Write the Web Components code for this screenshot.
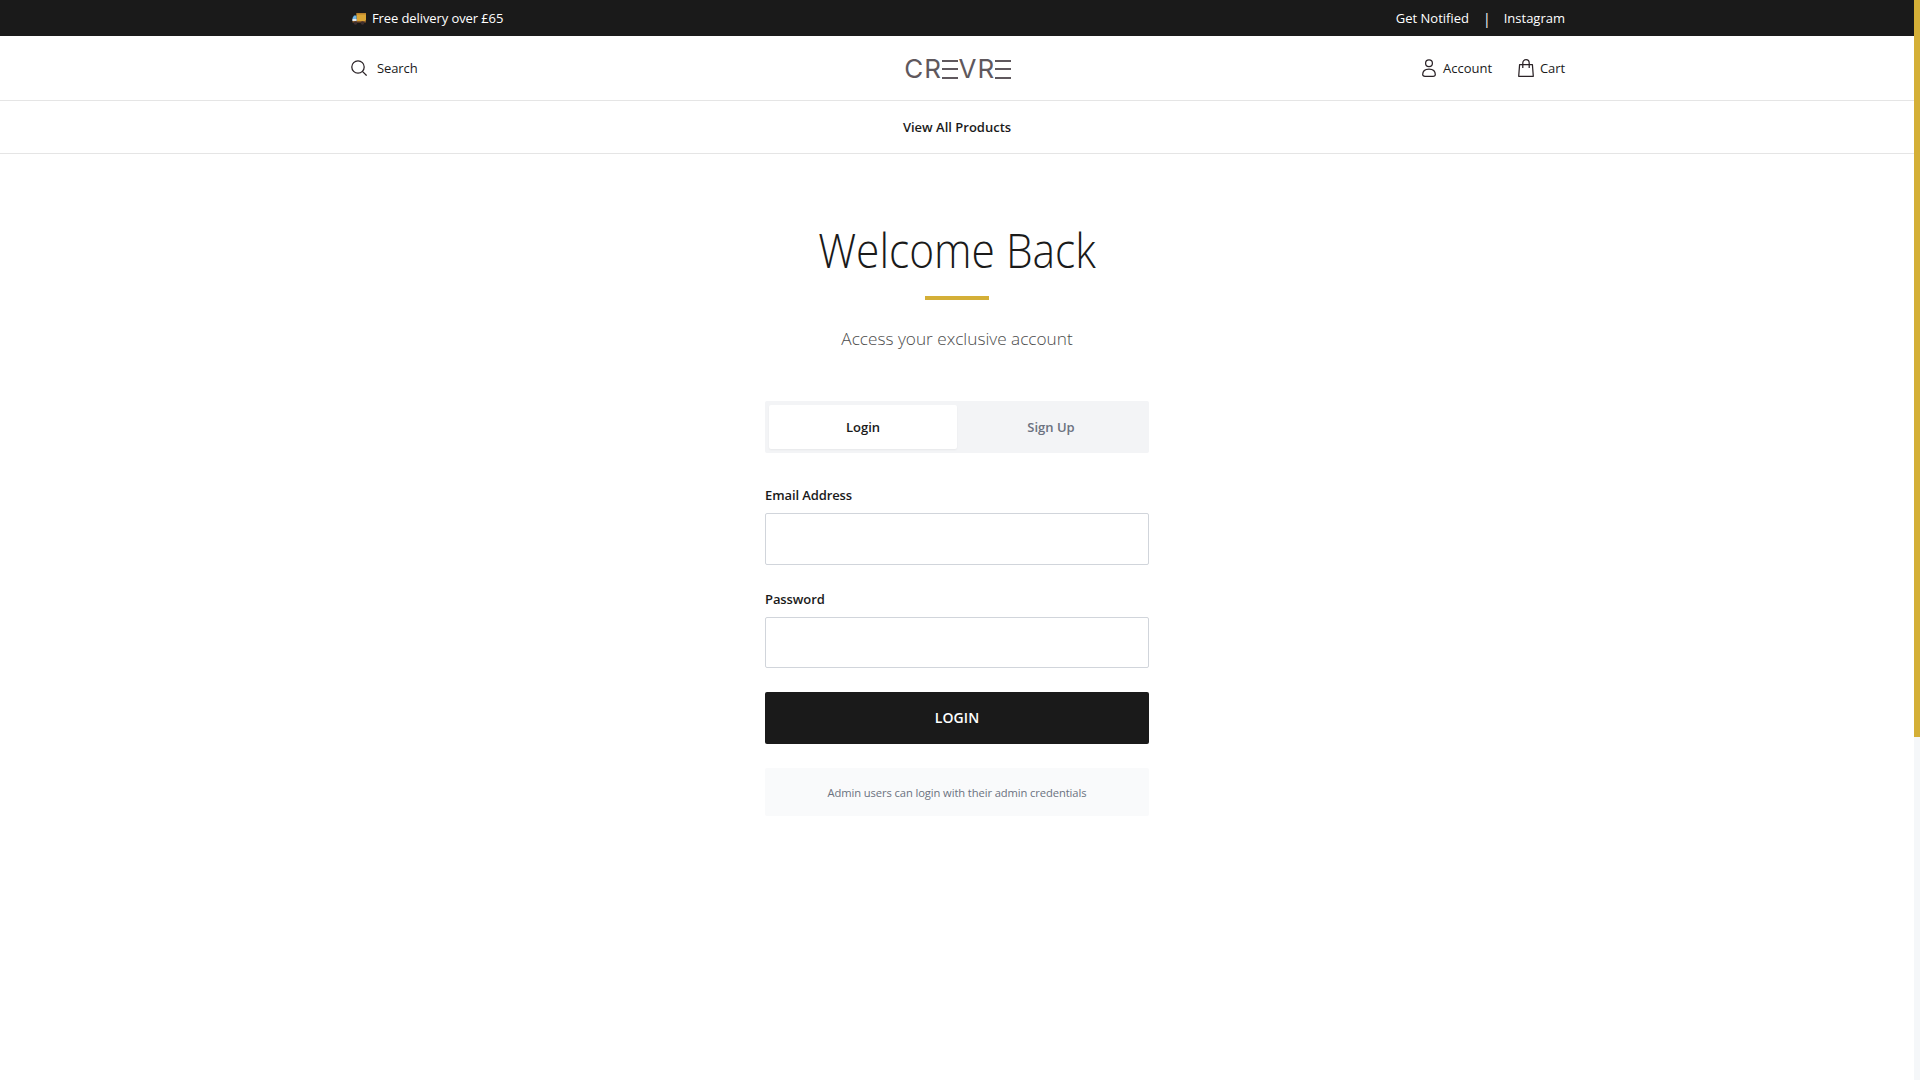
<!DOCTYPE html>
<html lang="en">
<head>
<meta charset="utf-8">
<title>Crevre - Login</title>
<style>
  html, body { height: 100%; }
  body {
    margin: 0;
    padding-right: 6px;
    box-sizing: border-box;
    background: #fff;
    color: #1a1a1a;
    font-family: "Open Sans", "Noto Sans", "Liberation Sans", sans-serif;
    font-size: 14px;
    overflow: hidden;
  }
</style>
</head>
<body>
<promo-bar></promo-bar>
<site-header></site-header>
<site-nav></site-nav>
<main-section>
  <auth-card></auth-card>
</main-section>
<gold-scrollbar></gold-scrollbar>

<script>
// top black strip
class PromoBar extends HTMLElement {
  constructor() {
    super();
    this.attachShadow({ mode: 'open' });
    this.shadowRoot.innerHTML = `
      <style>
        :host { display: block; background: #1a1a1a; color: #fff; margin-right: -6px; padding-right: 6px; }
        .inner {
          max-width: 1216px; height: 36px; margin: 0 auto; padding-left: 3px;
          box-sizing: border-box;
          display: flex; align-items: center; justify-content: space-between;
          font-size: 13px; letter-spacing: -0.1px;
        }
        .left { display: flex; align-items: center; gap: 6px; }
        .right { display: flex; align-items: center; letter-spacing: 0; }
        .sep { margin: 0 13px 0 14px; font-size: 14px; }
        svg { display: block; }
      </style>
      <div class="inner">
        <div class="left">
          <svg width="14" height="13" viewBox="0 0 14 13">
            <rect x="4.5" y="1" width="9.5" height="8" rx="1" fill="#d9a536"/>
            <rect x="4.5" y="1" width="9.5" height="1.5" fill="#b9812c"/>
            <path d="M0.5 6 L2 3.5 H4.5 V9 H0.5 Z" fill="#6fb6e8"/>
            <rect x="0.5" y="7" width="4" height="2" fill="#e8e8e8"/>
            <rect x="0.5" y="9" width="13.5" height="1.5" fill="#8a5a2b"/>
            <circle cx="3.5" cy="11" r="1.8" fill="#3f3030"/>
            <circle cx="10.5" cy="11" r="1.8" fill="#3f3030"/>
          </svg>
          <span>Free delivery over £65</span>
        </div>
        <div class="right">
          <span>Get Notified</span>
          <span class="sep">|</span>
          <span>Instagram</span>
        </div>
      </div>
    `;
  }
}

class SiteHeader extends HTMLElement {
  constructor() {
    super();
    this.attachShadow({ mode: 'open' });
    this.shadowRoot.innerHTML = `
      <style>
        :host { display: block; border-bottom: 1px solid #e5e5e5; }
        .inner {
          max-width: 1216px; height: 64px; margin: 0 auto;
          display: grid; grid-template-columns: 1fr auto 1fr; align-items: center;
          font-size: 13px; letter-spacing: -0.1px; color: #1a1a1a;
        }
        .item { display: flex; align-items: center; }
        .left { display: flex; padding-left: 2px; }
        .right { display: flex; justify-content: flex-end; gap: 26px; }
        .search { gap: 10px; }
        .account { gap: 7px; letter-spacing: 0; }
        .cart { gap: 6px; }
        svg { display: block; fill: none; stroke: #2a2226; stroke-width: 1.25; }
        .logo {
          font-family: "Inter", "Liberation Sans", sans-serif;
          font-size: 26px; font-weight: 400; color: #5f585d;
          letter-spacing: 1px; line-height: 1; display: flex;
          position: relative; top: 1px; left: 1px;
        }
        /* the logo's E is three flat bars */
        .logo b {
          font-weight: 400; color: transparent;
          background: linear-gradient(#5f585d, #5f585d) 0 4px / 16px 2px no-repeat,
                      linear-gradient(#5f585d, #5f585d) 0 12px / 16px 2px no-repeat,
                      linear-gradient(#5f585d, #5f585d) 0 21px / 16px 2px no-repeat;
        }
      </style>
      <div class="inner">
        <div class="left"><span class="item search">
          <svg width="16" height="16" viewBox="0 0 16 16"><circle cx="7" cy="7" r="6.2"/><path d="M11.4 11.4 L15.6 15.6"/></svg>
          <span>Search</span>
        </span></div>
        <div class="logo">CR<b>E</b>VR<b>E</b></div>
        <div class="right">
          <span class="item account">
            <svg width="14" height="18" viewBox="0 0 14 18"><circle cx="7" cy="4.2" r="3.4"/><path d="M0.7 15.5 C0.7 11.6 3.6 10 7 10 C10.4 10 13.3 11.6 13.3 15.5 C13.3 16.8 12 17.3 11 17.3 H3 C2 17.3 0.7 16.8 0.7 15.5 Z"/></svg>
            <span>Account</span>
          </span>
          <span class="item cart">
            <svg width="16" height="18" viewBox="0 0 16 18"><path d="M1.6 5.5 H14.4 L15.3 17.3 H0.7 Z" stroke-linejoin="round"/><path d="M4.8 9 V4 C4.8 2 6.2 0.7 8 0.7 C9.8 0.7 11.2 2 11.2 4 V9"/></svg>
            <span>Cart</span>
          </span>
        </div>
      </div>
    `;
  }
}

class SiteNav extends HTMLElement {
  constructor() {
    super();
    this.attachShadow({ mode: 'open' });
    this.shadowRoot.innerHTML = `
      <style>
        :host {
          display: flex; height: 52px; align-items: center; justify-content: center;
          border-bottom: 1px solid #e5e5e5;
          font-size: 13px; font-weight: 600; letter-spacing: 0;
        }
      </style>
      <span>View All Products</span>
    `;
  }
}

class MainSection extends HTMLElement {
  constructor() {
    super();
    this.attachShadow({ mode: 'open' });
    this.shadowRoot.innerHTML = `
      <style>
        :host { display: block; padding-top: 64px; }
        .wrap { width: 384px; margin: 0 auto; }
      </style>
      <div class="wrap"><slot></slot></div>
    `;
  }
}

class FormField extends HTMLElement {
  constructor() {
    super();
    this.attachShadow({ mode: 'open' });
    const label = this.getAttribute('label') || '';
    const type = this.getAttribute('type') || 'text';
    this.shadowRoot.innerHTML = `
      <style>
        :host { display: block; margin-bottom: 24px; }
        label { display: block; font-size: 13px; font-weight: 600; line-height: 20px; margin-bottom: 8px; letter-spacing: -0.1px; color: #1a1a1a; }
        input {
          display: block; width: 100%; height: 51.5px; box-sizing: border-box;
          border: 1px solid #d1d5db; border-radius: 2px; background: #fff; padding: 0 16px;
          font: inherit; outline: none;
        }
      </style>
      <label>${label}</label>
      <input type="${type}">
    `;
  }
}

class AuthCard extends HTMLElement {
  constructor() {
    super();
    this.attachShadow({ mode: 'open' });
    this.shadowRoot.innerHTML = `
      <style>
        :host { display: block; }
        header { text-align: center; margin-bottom: 48px; }
        /* narrowed to the width of the original's light face */
        h1 { margin: 0; padding-top: 1px; font-size: 48px; font-weight: 300; line-height: 61px; color: #1a1a1a; white-space: nowrap; transform: scaleX(.885); }
        .rule { width: 64px; height: 4px; background: #d4af37; margin: 16px auto 25px; }
        p { margin: 0; font-size: 17.2px; font-weight: 300; line-height: 28px; color: #4b4b4b; white-space: nowrap; }
        .tabs { display: flex; background: #f3f4f6; padding: 4px; border-radius: 2px; margin-bottom: 32px; height: 52px; box-sizing: border-box; }
        .tab { flex: 1; display: flex; align-items: center; justify-content: center; font-size: 13px; font-weight: 600; letter-spacing: 0; color: #6b7280; border-radius: 2px; }
        .tab.on { background: #fff; color: #1a1a1a; box-shadow: 0 1px 2px rgba(0,0,0,.05); }
        button {
          display: block; width: 100%; height: 52px; border: 0; border-radius: 2px; padding: 0 0 2px;
          background: #1a1a1a; color: #fff; font: 600 14px "Open Sans", sans-serif; letter-spacing: 0.1px;
        }
        .note {
          margin-top: 24px; height: 48px; background: #f9fafb; border-radius: 2px;
          display: flex; align-items: center; justify-content: center;
          font-size: 11.2px; color: #6b7280; letter-spacing: -0.1px;
        }
      </style>
      <header>
        <h1>Welcome Back</h1>
        <div class="rule"></div>
        <p>Access your exclusive account</p>
      </header>
      <div class="tabs">
        <div class="tab on">Login</div>
        <div class="tab">Sign Up</div>
      </div>
      <form-field label="Email Address" type="email"></form-field>
      <form-field label="Password" type="password"></form-field>
      <button type="button">LOGIN</button>
      <div class="note">Admin users can login with their admin credentials</div>
    `;
  }
}

// the page's styled scrollbar, drawn over the right edge
class GoldScrollbar extends HTMLElement {
  constructor() {
    super();
    this.attachShadow({ mode: 'open' });
    this.shadowRoot.innerHTML = `
      <style>
        :host { position: fixed; top: 0; right: 0; bottom: 0; width: 6px; background: #f5f7f9; }
        div { height: 737px; background: #d4af37; }
      </style>
      <div></div>
    `;
  }
}

customElements.define('form-field', FormField);
customElements.define('promo-bar', PromoBar);
customElements.define('site-header', SiteHeader);
customElements.define('site-nav', SiteNav);
customElements.define('main-section', MainSection);
customElements.define('auth-card', AuthCard);
customElements.define('gold-scrollbar', GoldScrollbar);
</script>
</body>
</html>
